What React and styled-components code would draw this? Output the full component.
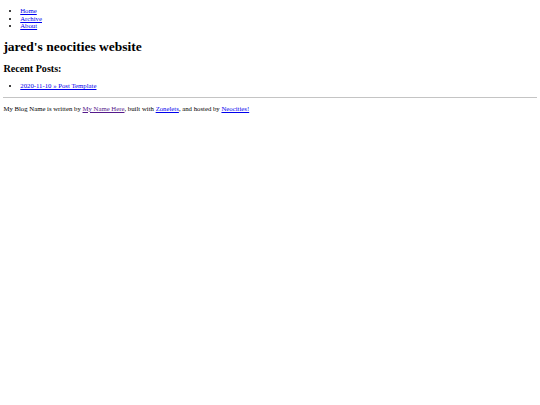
import React from "react";
import styled, { createGlobalStyle } from "styled-components";

// page is a default-styled html page shown at 0.421875 scale (1280 -> 540)
const GlobalStyle = createGlobalStyle`
    html, body {
        background: #ffffff;
    }
    body {
        margin: 3.375px;
        font-family: "Liberation Serif", "Times New Roman", serif;
        font-size: 6.75px;
        color: #000000;
    }
`;

const NavList = styled.ul`
    margin: ${(p) => (p.$top ? "3.75px 0 9px" : "7.4px 0 7.25px")};
    padding-left: 2.5em;
    list-style: disc;
    line-height: 7.5px;
`;

const Link = styled.a`
    color: ${(p) => (p.$visited ? "#551a8b" : "#0000ee")};
    text-decoration: underline;
`;

const Title = styled.h1`
    font-size: 2em;
    font-weight: bold;
    margin: 0.67em 0 8px;
`;

const SubTitle = styled.h2`
    font-size: 1.5em;
    font-weight: bold;
    margin: 0.83em 0;
`;

const Rule = styled.hr`
    margin: 0.5em 0;
    border: none;
    border-top: 1px solid #c4c4c4;
    height: 0;
`;

const Footer = styled.p`
    margin: 1em 0;
`;

export default function App() {
    return (
        <>
            <GlobalStyle />
            <NavList $top>
                <li><Link href="#">Home</Link></li>
                <li><Link href="#">Archive</Link></li>
                <li><Link href="#">About</Link></li>
            </NavList>
            <Title>jared's neocities website</Title>
            <SubTitle>Recent Posts:</SubTitle>
            <NavList>
                <li><Link href="#">2020-11-10 » Post Template</Link></li>
            </NavList>
            <Rule />
            <Footer>
                My Blog Name is written by <Link href="#" $visited>My Name Here</Link>, built with{" "}
                <Link href="#">Zonelets</Link>, and hosted by <Link href="#">Neocities!</Link>
            </Footer>
        </>
    );
}
